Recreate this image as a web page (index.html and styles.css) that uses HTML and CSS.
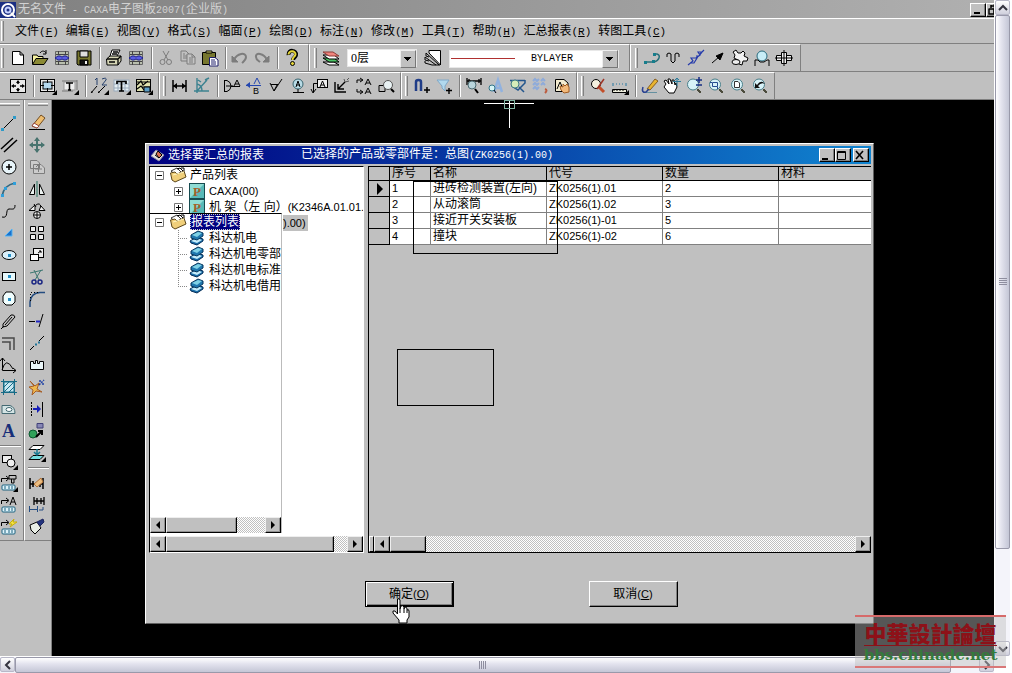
FILE: index.html
```html
<!DOCTYPE html>
<html lang="zh-CN">
<head>
<meta charset="utf-8">
<title>无名文件 - CAXA电子图板2007(企业版)</title>
<link rel="stylesheet" href="styles.css">
</head>
<body>
<svg class="defs" aria-hidden="true">
  <symbol id="tri-l" viewBox="0 0 8 8"><path d="M6 0V8L2 4Z" fill="#000" stroke="none"/></symbol>
  <symbol id="tri-r" viewBox="0 0 8 8"><path d="M2 0V8L6 4Z" fill="#000" stroke="none"/></symbol>
  <symbol id="folder" viewBox="0 0 18 16"><path d="M2 4L8 1L12 5L7 8Z" fill="#fff" stroke="#333"/><path d="M1.500 6L6 5L8 7L15 4L17 10L6 15L3 13Z" fill="#f0cf7a" stroke="#5c471a"/><path d="M4 8L15 5" stroke="#fff5c0"/><path d="M8 2L11 1L14 4M12 1H15V4" stroke="#000"/></symbol>
  <symbol id="book" viewBox="0 0 16 16"><path d="M1 11L8 7L14 9V11L8 15L2 13Z" fill="#176ca8" stroke="#052e58"/><path d="M2 11L8 8L13 10L8 13Z" fill="#c5edfa" stroke="none"/><path d="M2 5L9 1L14 3V6L8 10L2 8Z" fill="#1f77ae" stroke="#06365c"/><path d="M3 5L9 2L13 3L8 7Z" fill="#7fd2e6" stroke="none"/></symbol>
  <symbol id="part" viewBox="0 0 16 16"><rect x=".5" y=".5" width="15" height="15" fill="#58b9b8" stroke="#164b50"/><path d="M1 1H15L1 15Z" fill="#90dcd4" stroke="none"/><text x="4" y="13" font-family="Liberation Serif" font-weight="bold" font-size="13" fill="#a5602a" stroke="none">P</text></symbol>
  <symbol id="plus" viewBox="0 0 9 9"><path d="M.5.5H8.500V8.500H.5Z" fill="none" stroke="#777"/><path d="M2 4.500H7M4.500 2V7" fill="none" stroke="#000"/></symbol>
  <symbol id="minus" viewBox="0 0 9 9"><path d="M.5.5H8.500V8.500H.5Z" fill="none" stroke="#777"/><path d="M2 4.500H7" fill="none" stroke="#000"/></symbol>
  <symbol id="doc-link" viewBox="0 0 18 18"><path d="M2.500 2.500H15.500V15.500H2.500Z" fill="#b9bfae" stroke="#666"/><path d="M5.500 2V6M12.500 2V6M5.500 16V12M12.500 16V12M3 5.500H15M3 12.500H15" stroke="#444"/><path d="M2 9L5 7H7L9 8L11 7H13L16 9L13 11H11L9 10L7 11H5Z" fill="#5a5ee0" stroke="#20208c"/></symbol>
  <symbol id="lens" viewBox="0 0 18 18"><circle cx="8" cy="7.500" r="5.500" fill="#d7f2f8" stroke="#4a7f8a"/><path d="M12 12L16 16M12 13L15 16M13 12L16 15" stroke="#4b4b3c"/></symbol>
</svg>
<div class="shell">
  <main class="app">
    <header class="titlebar">
      <svg class="logo" viewBox="0 0 16 16" aria-hidden="true"><rect width="16" height="16" fill="#1b2f83" stroke="none"/><circle cx="8" cy="8" r="6" stroke="#fff" stroke-width="2"/><circle cx="8" cy="8" r="2.500" stroke="#c7d2ff" stroke-width="2"/><path d="M11 11L15 15" stroke="#fff" stroke-width="2"/></svg>
      <h1>无名文件<span class="lat"> - CAXA</span>电子图板<span class="lat">2007(</span>企业版<span class="lat">)</span></h1>
      <button class="win" aria-label="最小化"><svg viewBox="0 0 12 11"><path d="M3 9H9" stroke-width="2"/></svg></button>
      <button class="win cut" aria-label="还原"><svg viewBox="0 0 12 11"><path d="M4 2H9V6M4 1V4M1.500 5H7V10H2V5" stroke-width="1.500"/></svg></button>
    </header>
    <nav class="menubar">
      <i class="grip"></i>
      <a href="#">文件<span class="lat">(<u>F</u>)</span></a><a href="#">编辑<span class="lat">(<u>E</u>)</span></a><a href="#">视图<span class="lat">(<u>V</u>)</span></a><a href="#">格式<span class="lat">(<u>S</u>)</span></a><a href="#">幅面<span class="lat">(<u>P</u>)</span></a><a href="#">绘图<span class="lat">(<u>D</u>)</span></a><a href="#">标注<span class="lat">(<u>N</u>)</span></a><a href="#">修改<span class="lat">(<u>M</u>)</span></a><a href="#">工具<span class="lat">(<u>T</u>)</span></a><a href="#">帮助<span class="lat">(<u>H</u>)</span></a><a href="#">汇总报表<span class="lat">(<u>R</u>)</span></a><a href="#">转图工具<span class="lat">(<u>C</u>)</span></a>
    </nav>
    <div class="barrow standard">
      <div class="bar">
        <i class="grip"></i>
        <button aria-label="新建"><svg viewBox="0 0 18 18"><path d="M3.500 2.500H11L14.500 6V15.500H3.500ZM11 2.500V6H14.500" fill="#fff"/></svg></button>
        <button aria-label="打开"><svg viewBox="0 0 18 18"><path d="M1.500 15V6H6L7 7.500H12V9" fill="#f5f0a0"/><path d="M1.500 15.500L5 9.500H17L13 15.500Z" fill="#8b8a35"/><path d="M9 4C11 1 14 2 15 4M15 1V5H12"/></svg></button>
        <button aria-label="部分存储"><svg><use href="#doc-link"/></svg></button>
        <button aria-label="保存"><svg viewBox="0 0 18 18"><path d="M2 2H16V16H3L2 15Z" fill="#77762d"/><path d="M5 2H13V8H5Z" fill="#ddd"/><path d="M5 11H13V16H5Z" fill="#111"/><path d="M11 12V15" stroke="#eee" stroke-width="2"/></svg></button>
        <i class="sep"></i>
        <button aria-label="打印"><svg viewBox="0 0 18 18"><path d="M5 7L7 1H15L12 7" fill="#fff"/><path d="M1.500 10L5 7H16V12L13 16H2Z" fill="#d5d5b5"/><path d="M2 10H13L16 7M13 10V16M8 3H13M7 5H12M4 13H10" stroke-width="1.300"/></svg></button>
        <button aria-label="打印排版"><svg><use href="#doc-link"/></svg></button>
        <i class="sep"></i>
        <button aria-label="剪切"><svg class="dim" viewBox="0 0 18 18"><path d="M6 2L11 11M12 2L7 11" /><circle cx="5.500" cy="13" r="2.500"/><circle cx="12" cy="13" r="2.500"/></svg></button>
        <button aria-label="复制"><svg class="dim" viewBox="0 0 18 18"><path d="M2 2H7L10 5V12H2ZM4 5H6M4 7H8M4 9H8"/><path d="M8 5H13L16 8V15H8Z" fill="#c4c4c4"/><path d="M10 9H14M10 11H14M10 13H14M13 5V8H16"/></svg></button>
        <button aria-label="粘贴"><svg viewBox="0 0 18 18"><path d="M1.500 3.500H14.500V15.500H1.500Z" fill="#77772f"/><path d="M5 4V2H11V4Z" fill="#e4e07a"/><path d="M8.500 8.500H14L17 11V17H8.500Z" fill="#fff" stroke="#20206c"/><path d="M10 11H14M10 13H15M10 15H15" stroke="#20206c"/></svg></button>
        <i class="sep"></i>
        <button aria-label="撤消"><svg class="dim" viewBox="0 0 18 18"><path d="M3 11C6 4 15 3 15 8C15 11 12 13 11 14" stroke-width="2"/><path d="M1 7V13H7Z" fill="#7d7d7d"/></svg></button>
        <button aria-label="重做"><svg class="dim" viewBox="0 0 18 18"><path d="M14 11C11 4 2 3 3 8C3 11 6 12 7 13" stroke-width="2"/><path d="M16 7V13H10Z" fill="#7d7d7d"/></svg></button>
        <i class="sep"></i>
        <button aria-label="帮助"><svg viewBox="0 0 18 18"><path d="M5.500 6C5 0 14 1 13 6C13 8 10 8.500 10 11" stroke-width="4"/><path d="M5.500 5.500C5.500 1 13 1.500 12.500 5.500C12 8 9.500 8 9.500 11" stroke="#e5d539" stroke-width="2"/><circle cx="9.500" cy="14.500" r="2" fill="#e5d539"/></svg></button>
      </div>
      <div class="bar">
        <i class="grip"></i>
        <button aria-label="层控制"><svg viewBox="0 0 18 18"><path d="M1 13H12L17 16H7Z" fill="#fff"/><path d="M1 9H12L17 13H7Z" fill="#4ac564"/><path d="M1 6H12L17 10H7Z" fill="#fff"/><path d="M1 3H11L17 7H7Z" fill="#f0847d" stroke="#8c3b36"/></svg></button>
        <label class="combo layer"><select aria-label="当前层"><option>0层</option></select></label>
        <button aria-label="线型"><svg viewBox="0 0 18 18"><path d="M5 1.500H16.500V16L5 4Z" fill="#fff"/><path d="M2 4L15 16M1 8L12 16M2 4V7L5 8M1 8V11L5 12M1 12V14L8 16H16"/></svg></button>
        <label class="combo linetype"><select aria-label="线型选择"><option>BYLAYER</option></select></label>
      </div>
      <div class="bar">
        <i class="grip"></i>
        <button aria-label="多段线"><svg viewBox="0 0 18 18"><path d="M2 13H11M11 5H14Q17 6 16 9T11 13" stroke="#286f79" stroke-width="1.500"/><path d="M1 12H4V15H1ZM9 11H12V14H9ZM10 4H13V7H10Z" fill="#167d8c" stroke="none"/></svg></button>
        <button aria-label="波浪线"><svg viewBox="0 0 18 18"><path d="M2 8V5L4 4L6 5V12L8 14L10 12V5L12 4L14 5V8"/></svg></button>
        <button aria-label="双折线"><svg class="blue" viewBox="0 0 18 18"><path d="M1 16L6 12L4 9H10L7 14H3M9 9L13 6L11 3H15L12 7H9M13 5L17 1" stroke-width="1.200"/></svg></button>
        <button aria-label="箭头"><svg viewBox="0 0 18 18"><path d="M3 14L10 8"/><path d="M14 4L11 11L7 7Z" fill="#000"/></svg></button>
        <button aria-label="齿轮"><svg viewBox="0 0 18 18"><path d="M2 3L5 1L7 4H10L12 2L14 4L13 7L17 9L16 12L12 12L11 16L8 15L7 11L3 9L4 6Z" fill="#f2f2f2"/><ellipse cx="5" cy="13" rx="4" ry="2.500" fill="#eee"/></svg></button>
        <button aria-label="圆弧拟合"><svg viewBox="0 0 18 18"><circle cx="9" cy="7" r="5" fill="#c8edf7" stroke="#286a7d"/><path d="M2 17V11H5L7 13H11L14 11H16V17"/></svg></button>
        <button aria-label="孔轴"><svg viewBox="0 0 18 18"><path d="M1.500 6.500H6.500V3.500H11.500V6.500H16.500V11.500H11.500V14.500H6.500V11.500H1.500Z" fill="#eee"/><path d="M6.500 6V12M11.500 6V12M9 1V17M0 9H18"/></svg></button>
      </div>
    </div>
    <div class="barrow">
      <div class="bar">
        <button aria-label="图幅"><svg viewBox="0 0 18 18"><rect x="1.500" y="2.500" width="15" height="13" fill="#e8e8e8"/><path d="M9 4V7M9 11V14M4 9H7M11 9H14" stroke-width="1.500"/><path d="M7 6L9 3L11 6ZM7 12L9 15L11 12ZM5 7L2 9L5 11ZM13 7L16 9L13 11Z" fill="#000" stroke="none"/></svg></button>
        <i class="sep"></i>
        <button aria-label="图框"><svg viewBox="0 0 18 18"><rect x="1.500" y="2.500" width="14" height="12" fill="#e8e8e8"/><rect x="4" y="5" width="9" height="7" fill="#b5d9ee"/><path d="M8.500 2V6M8.500 11V15M1 8.500H5M12 8.500H16"/><path d="M18 13V18H13Z" fill="#000" stroke="none"/></svg></button>
        <button aria-label="标题栏"><svg viewBox="0 0 18 18"><path d="M1 4H16M1 14H12M16 3V13" stroke="#777"/><rect x="3" y="5" width="11" height="8" fill="#eee" stroke="#999"/><path d="M5 6H12M8.500 6V13M7 13H10" stroke-width="1.500"/><path d="M18 13V18H13Z" fill="#000" stroke="none"/></svg></button>
        <i class="sep"></i>
        <button aria-label="零件序号"><svg viewBox="0 0 18 18"><path d="M4 3L6 1V8M11 2Q16 0 15 3L11 8H16" stroke="#26406c"/><path d="M0 16L6 9M7 16L14 9M0 15H2M7 15H9"/><path d="M18 13V18H13Z" fill="#000" stroke="none"/></svg></button>
        <button aria-label="明细表"><svg viewBox="0 0 18 18"><rect x="1" y="3" width="15" height="11" fill="#e5eef2" stroke="#9ab"/><path d="M1 7H16M1 11H16M5 3V14M12 3V14" stroke="#9ab"/><path d="M4 7V4.500H13V7M8.500 4V14M6 14H11" stroke-width="1.700"/><path d="M18 13V18H13Z" fill="#000" stroke="none"/></svg></button>
        <button aria-label="图库"><svg viewBox="0 0 18 18"><rect x="1.500" y="2.500" width="14" height="12" fill="#e0e1ad"/><path d="M2 8L6 4L8 8L13 4M2 12L6 9L9 13M2 5H15M7 10H15" stroke-width="1.200"/><path d="M9 10H15V15H9Z" fill="#5b9dc6"/><path d="M18 13V18H13Z" fill="#000" stroke="none"/></svg></button>
      </div>
      <div class="bar">
        <i class="grip"></i>
        <button aria-label="尺寸标注"><svg viewBox="0 0 18 18"><path d="M2 3V15M15 3V15M2 9H15" stroke-width="1.500"/><path d="M6 6V12L2 9ZM11 6V12L15 9Z" fill="#000" stroke="none"/></svg></button>
        <button aria-label="坐标标注"><svg class="teal" viewBox="0 0 18 18"><path d="M4 1V16M1 14H16M4 14L14 3M4 7Q9 8 9 14M12 3L16 1M5 3L8 5" stroke-width="1.400"/></svg></button>
        <i class="sep"></i>
        <button aria-label="倒角标注"><svg viewBox="0 0 18 18"><path d="M1.500 3V15M1 3.500H4Q8 5 8 9T4 14.500H1M3 9H10M8 9.500H17M11 9L14 3L17 9M12 7H16"/></svg></button>
        <button aria-label="引出说明"><svg viewBox="0 0 18 18"><path d="M1 8.500H16M9 7L12 1L15 7" stroke="#2447af"/><path d="M1 8L5 5V11Z" fill="#2447af" stroke="none"/><text x="8" y="17" font-size="9" font-family="Liberation Sans" fill="#000" stroke="none">B</text></svg></button>
        <button aria-label="粗糙度"><svg viewBox="0 0 18 18"><path d="M3 6L7 14L15 2M4 7.500H11M7 14L10 8"/></svg></button>
        <button aria-label="基准代号"><svg viewBox="0 0 18 18"><circle cx="9" cy="7" r="5" fill="#b8dbe6" stroke="#37636e"/><path d="M7 10L9 4L11 10M7 8H11M9 12V15M4 15.500H15"/></svg></button>
        <button aria-label="形位公差"><svg viewBox="0 0 18 18"><rect x="6.500" y="2.500" width="10" height="8" fill="#eee"/><path d="M9 10L11.500 4L14 10M10 8H13M6 6.500H2.500V15M0 12L2 16L5 12"/></svg></button>
        <button aria-label="焊接符号"><svg viewBox="0 0 18 18"><path d="M2 5V15H13M5 7V12H11M5 12L12 5" stroke-width="1.400"/><path d="M12 5L11 2M12 5L16 4M14 3L16 1" stroke="#555"/></svg></button>
        <button aria-label="剖切符号"><svg viewBox="0 0 18 18"><path d="M2 6V3H7M2 12V15H7M5 1L8 3L5 5M5 13L8 15L5 17"/><path d="M10 8L13 2L16 8M10 17L13 11L16 17M11 6H15M11 15H15"/></svg></button>
        <button aria-label="局部放大"><svg viewBox="0 0 18 18"><path d="M2 8.500H8V14.500H2Z"/><circle cx="11" cy="8" r="4.500" fill="#e8f1f3" stroke="#555"/><path d="M14 12L17 15" stroke-width="2"/></svg></button>
      </div>
      <div class="bar">
        <i class="grip"></i>
        <button aria-label="捕捉"><svg viewBox="0 0 18 18"><path d="M3 14V5Q3 3 5.500 3T8 5V14" stroke="#203d88" stroke-width="2.500"/><path d="M11 13H17M14 10V16" stroke-width="1.500"/></svg></button>
        <button aria-label="过滤"><svg viewBox="0 0 18 18"><path d="M2 3H14L10 9V14L7 11V9Z" fill="#b1d9ee" stroke="#80a8c8"/><path d="M11 13.500H17M14 11V17" stroke-width="1.400"/></svg></button>
        <i class="sep"></i>
        <button aria-label="查询距离"><svg viewBox="0 0 18 18"><path d="M2 1V8M16 1V8M2 4H16M4 2V6M14 2V6" stroke-width="1.300"/><circle cx="7" cy="8" r="4" fill="#b9d5dc" stroke="#4c6b72"/><path d="M10 12L13 16" stroke-width="2"/></svg></button>
        <button aria-label="查询文字"><svg viewBox="0 0 18 18"><path d="M7 15L11 3L15 15M8 11H14" stroke="#91b2df" stroke-width="2.500"/><circle cx="5" cy="11" r="3" fill="#d6f4f6" stroke="#31758a"/><path d="M7 13L9 16"/></svg></button>
        <button aria-label="面积"><svg viewBox="0 0 18 18"><path d="M1 3.500H16M3 3V9L9 13L16 6V3M10 10L15 15" stroke="#23568d" stroke-width="1.500"/><circle cx="6" cy="7" r="4" fill="#d5ecb9" stroke="#407b85"/></svg></button>
        <button aria-label="打断标注"><svg class="sky" viewBox="0 0 18 18"><path d="M2 4L4 2L6 4L8 2M2 8L4 6L6 8L8 6M2 12L4 10L6 12L8 10M10 4L12 2L14 4M10 8L12 6L14 8" stroke-width="2"/><path d="M14 12Q17 13 14 16" stroke="#bd5c3e" stroke-width="2"/></svg></button>
        <button aria-label="属性查看"><svg viewBox="0 0 18 18"><path d="M2.500 2.500H11L15 6V14.500H2.500Z" fill="#f3ebcf"/><path d="M4 12L7 5L10 12"/><path d="M8 13L7 9L10 10V7L12 9L14 7L16 10V15L11 16Z" fill="#f2b97a" stroke="#9f5b22"/></svg></button>
      </div>
      <div class="bar">
        <i class="grip"></i>
        <button aria-label="查找替换"><svg viewBox="0 0 18 18"><circle cx="7" cy="7" r="4.500" fill="#f5f1df"/><path d="M10 10L15 15" stroke="#c34e28" stroke-width="3"/><path d="M8 12L15 2" stroke="#9e3527" stroke-width="1.500"/></svg></button>
        <button aria-label="标尺"><svg viewBox="0 0 18 18"><path d="M2 6V9M5 7H6M8 7H9M11 7H12M15 6V9" stroke="#2777a0"/><path d="M1.500 12.500H15.500V15.500H1.500Z" fill="#eed"/><path d="M3 12V14M6 12V14M9 12V14M12 12V14"/><path d="M18 13V18H13Z" fill="#000" stroke="none"/></svg></button>
        <i class="sep"></i>
        <button aria-label="重画"><svg viewBox="0 0 18 18"><path d="M2 15.500H16" stroke="#6590a0"/><path d="M6 12L14 2L17 4L9 13Z" fill="#e9b52f" stroke="#865d20"/><path d="M2 10Q0 16 5 15L8 12" stroke="#293f91" stroke-width="1.500"/></svg></button>
        <button aria-label="平移"><svg viewBox="0 0 18 18"><path d="M3 7L1 4L3 3L6 7L5 2H7L9 7V3H11L12 8L13 6L14 10L11 16H6L1 10Z" fill="#fff"/><path d="M14 1V9M10 4.500H18M12 3L14 1L16 3" stroke="#2b7b9a"/></svg></button>
        <button aria-label="动态缩放"><svg viewBox="0 0 18 18"><use href="#lens"/><path d="M11 3H17M14 0V6M11 8H17" stroke="#162e84" stroke-width="1.500"/></svg></button>
        <button aria-label="窗口显示"><svg viewBox="0 0 18 18"><use href="#lens"/><path d="M5.500 5.500H10.500V9.500H5.500ZM3 5.500H5M10.500 10V12" stroke="#244c91"/></svg></button>
        <button aria-label="全部显示"><svg viewBox="0 0 18 18"><use href="#lens"/><path d="M5.500 4.500H9L10.500 6V10.500H5.500Z" fill="#fff" stroke="#333"/></svg></button>
        <button aria-label="显示回溯"><svg viewBox="0 0 18 18"><use href="#lens"/><path d="M4 6V11H9L7 9Q10 5 14 7Q10 2 6 8Z" fill="#111" stroke="none"/></svg></button>
      </div>
    </div>
    <div class="work">
      <aside class="side">
        <div class="vbar">
          <i class="vgrip"></i>
          <button aria-label="直线"><svg viewBox="0 0 18 18"><path d="M2 16L15 3"/><path d="M1 14H4V17H1ZM13 2H16V5H13Z" fill="#2e9ac8" stroke="none"/></svg></button>
          <button aria-label="平行线"><svg viewBox="0 0 18 18"><path d="M1 13L13 2M4 16L17 4" stroke-width="1.500"/></svg></button>
          <button aria-label="圆"><svg viewBox="0 0 18 18"><circle cx="9" cy="9" r="7" fill="#e8f5fa"/><path d="M6 9H12M9 6V12" stroke-width="1.500"/></svg></button>
          <button aria-label="圆弧"><svg viewBox="0 0 18 18"><path d="M2 16Q4 5 15 3" stroke="#32677e" stroke-width="1.500"/><path d="M1 14H4V17H1ZM4 7H7V10H4ZM13 2H16V5H13Z" fill="#2e9fdb" stroke="none"/></svg></button>
          <button aria-label="样条"><svg viewBox="0 0 18 18"><path d="M2 15C9 17 5 7 9 7S15 8 15 3"/></svg></button>
          <button aria-label="点"><svg viewBox="0 0 18 18"><path d="M12 5V12H5Z" fill="#1b72ca" stroke="#54b3f5"/></svg></button>
          <button aria-label="椭圆"><svg viewBox="0 0 18 18"><ellipse cx="9" cy="9" rx="7" ry="4.500" fill="#d9effa"/><rect x="8" y="8" width="3" height="3" fill="#278ec3" stroke="none"/></svg></button>
          <button aria-label="矩形"><svg viewBox="0 0 18 18"><rect x="2.500" y="4.500" width="13" height="8" fill="#e6f8fb"/><rect x="8" y="7" width="3" height="3" fill="#278ec3" stroke="none"/></svg></button>
          <button aria-label="多边形"><svg viewBox="0 0 18 18"><path d="M6 2H12L15 6V12L12 15H6L3 12V6Z" fill="#f1ffff"/><rect x="8" y="8" width="3" height="3" fill="#278ec3" stroke="none"/></svg></button>
          <button aria-label="中心线"><svg viewBox="0 0 18 18"><path d="M3 12L11 3Q14 2 15 5L7 14L3 15ZM5 13L12 5M1 17L4 14"/></svg></button>
          <button aria-label="等距线"><svg viewBox="0 0 18 18"><path d="M2 4H14V16M2 8H10V16" stroke="#484848" stroke-width="1.500"/></svg></button>
          <button aria-label="公式曲线"><svg viewBox="0 0 18 18"><path d="M2.500 2V14.500H16M0 5L2.500 2L5 5M13 12L16 14.500L13 17M2 14Q6 0 13 13"/></svg></button>
          <button aria-label="剖面线"><svg viewBox="0 0 18 18"><rect x="4" y="4" width="10" height="10" fill="#c8e8f2" stroke="#176b86"/><path d="M3.500 1V17M14.500 1V17M1 3.500H17M1 14.500H17M4 9L9 4M4 14L14 4M9 14L14 9" stroke="#176b86"/></svg></button>
          <button aria-label="填充"><svg viewBox="0 0 18 18"><path d="M2 13.500V5.500H10Q15 7 15 13.500Z" fill="#d4e4e5" stroke="#446972"/><ellipse cx="9" cy="9.500" rx="3" ry="2" fill="#fff" stroke="#446972"/></svg></button>
          <button aria-label="文字"><svg viewBox="0 0 18 18"><text x="2" y="15" font-family="Liberation Serif" font-size="18" font-weight="bold" fill="#172e79" stroke="none">A</text></svg></button>
          <i class="hsep"></i>
          <button aria-label="块"><svg viewBox="0 0 18 18"><rect x="2.500" y="3.500" width="9" height="7" fill="#eee"/><circle cx="11" cy="11" r="4" fill="#eee"/><path d="M18 13V18H13Z" fill="#000" stroke="none"/></svg></button>
          <button aria-label="提取图符"><svg viewBox="0 0 18 18"><path d="M1.500 8V4.500H8M6 2L9 4.500L6 7M9 1.500H16V5H9ZM11.500 5V9H14V5"/><rect x="2" y="11" width="13" height="5" rx="1" fill="#dff3fa" stroke="#1c6380"/><path d="M5 12V15M9 12V15M12 12V15" stroke="#1c6380"/><path d="M18 13V18H13Z" fill="#000" stroke="none"/></svg></button>
          <button aria-label="图符文字"><svg viewBox="0 0 18 18"><path d="M1.500 8V4.500H8M6 2L9 4.500L6 7M10 9L13 1L16 9M11 6H15"/><rect x="2" y="11" width="13" height="5" rx="1" fill="#dff3fa" stroke="#1c6380"/><path d="M5 12V15M9 12V15M12 12V15" stroke="#1c6380"/></svg></button>
          <button aria-label="驱动图符"><svg viewBox="0 0 18 18"><path d="M1.500 8V4.500H8M6 2L9 4.500L6 7"/><path d="M14 1L9 6H12L10 9L17 4H13Z" fill="#f4e540" stroke="#c5ad12"/><rect x="2" y="11" width="13" height="5" rx="1" fill="#dff3fa" stroke="#1c6380"/><path d="M5 12V15M9 12V15M12 12V15" stroke="#1c6380"/></svg></button>
        </div>
        <div class="vbar">
          <i class="vgrip"></i>
          <button aria-label="删除"><svg viewBox="0 0 18 18"><path d="M1 15.500H17"/><path d="M4 12L13 1L17 4L9 14Z" fill="#eebd6f" stroke="#704c22"/><path d="M4 12L6 9L11 12L9 14Z" fill="#fff" stroke="#984539"/></svg></button>
          <button aria-label="移动"><svg viewBox="0 0 18 18"><path d="M9 2V16M2 9H16" stroke="#48746f" stroke-width="2"/><path d="M6 5L9 1L12 5ZM6 13L9 17L12 13ZM5 6L1 9L5 12ZM13 6L17 9L13 12Z" fill="#48746f" stroke="none"/></svg></button>
          <button aria-label="复制选择"><svg class="dim" viewBox="0 0 18 18"><path d="M2.500 2.500H9L11.500 5V10.500H2.500ZM5.500 6.500H13L16.500 10V15.500H5.500Z" fill="#ccc"/><path d="M7 11H14M10.500 8V14M8 9L10 7L12 9"/></svg></button>
          <button aria-label="镜像"><svg viewBox="0 0 18 18"><path d="M6.500 4V14.500H1.500ZM11.500 4V14.500H16.500Z" fill="#edf3f1"/><path d="M9 1V17" stroke="#287460"/></svg></button>
          <button aria-label="旋转"><svg viewBox="0 0 18 18"><path d="M7 8.500H1L7 3ZM11 8.500H17L13 4Z" fill="#eee"/><circle cx="9" cy="13" r="3.500" fill="#eee"/><path d="M6 13H12M9 10V16M8 3Q12 0 13 5M6 2L8 5"/></svg></button>
          <button aria-label="阵列"><svg viewBox="0 0 18 18"><path d="M2.500 2.500H7.500V7.500H2.500ZM10.500 2.500H15.500V7.500H10.500ZM2.500 10.500H7.500V15.500H2.500ZM10.500 10.500H15.500V15.500H10.500Z" fill="#eee"/></svg></button>
          <button aria-label="比例缩放"><svg viewBox="0 0 18 18"><rect x="5.500" y="2.500" width="10" height="9" fill="#eee"/><rect x="2.500" y="8.500" width="8" height="6" fill="#fff"/><path d="M10 7L13 5M11 5H13V7"/></svg></button>
          <button aria-label="裁剪"><svg viewBox="0 0 18 18"><path d="M2 5L15 2M6 2L11 12M13 2L7 12" stroke="#3d7771"/><circle cx="6" cy="14" r="2" stroke="#1b2683" stroke-width="1.500"/><circle cx="12" cy="14" r="2" stroke="#1b2683" stroke-width="1.500"/></svg></button>
          <button aria-label="过渡"><svg viewBox="0 0 18 18"><path d="M2 17V12Q3 3 12 2.500H17" stroke="#244c80" stroke-width="1.500"/><path d="M2.500 11V2.500H12" stroke-dasharray="1 2"/></svg></button>
          <button aria-label="齐边"><svg viewBox="0 0 18 18"><path d="M1 9.500H7M11 15L15 2"/><path d="M8 9.500H12" stroke="#2127c1" stroke-width="2"/></svg></button>
          <button aria-label="打断"><svg viewBox="0 0 18 18"><path d="M2 16L6 12M11 7L16 2"/><path d="M7 10.500H9M10 8.500H12" stroke="#25789b" stroke-width="2"/></svg></button>
          <button aria-label="拉伸"><svg viewBox="0 0 18 18"><path d="M2.500 5.500H5.500V7.500H7.500V4.500H9.500V7.500H11.500V5.500H15.500V13.500H2.500Z" fill="#eaf6f8"/></svg></button>
          <button aria-label="分解"><svg viewBox="0 0 18 18"><path d="M2 3L7 8L11 5L9 11L14 14L8 13L4 17L5 12L1 9L6 8Z" fill="#efb84d" stroke="#a55d27"/><path d="M11 7L16 2M12 2V4M14 6H16" stroke="#2143a5" stroke-width="1.500" stroke-dasharray="2 1"/></svg></button>
          <button aria-label="标注编辑"><svg viewBox="0 0 18 18"><path d="M3.500 2V17" stroke-dasharray="2 1"/><path d="M14.500 2V17" /><path d="M5 9H10" stroke="#171fb8" stroke-width="2"/><path d="M13 9L9 5V13Z" fill="#171fb8" stroke="none"/></svg></button>
          <button aria-label="格式刷"><svg viewBox="0 0 18 18"><circle cx="5" cy="12" r="4" fill="#30a15a" stroke="#0c5931"/><path d="M9 1.500H15V6H9Z" fill="#8787b5" stroke="#404078"/><path d="M8 15L14 9M10 9H14V13" stroke-width="2"/></svg></button>
          <button aria-label="图层移动"><svg viewBox="0 0 18 18"><path d="M5 1.500H16L12 5.500H1Z" fill="#fff"/><path d="M5 11.500H16L12 15.500H1Z" fill="#76dee1"/><path d="M9 5V11M6 8L9 11L12 8" stroke="#157991" stroke-width="1.500"/><path d="M18 13V18H13Z" fill="#000" stroke="none"/></svg></button>
          <i class="hsep"></i>
          <button aria-label="尺寸驱动"><svg viewBox="0 0 18 18"><path d="M2 4V15M15 4V15M2 10H15M5 7V13M12 7V13" stroke-width="1.500"/><path d="M6 10L13 4L15 8L9 13Z" fill="#ecbd80" stroke="#af7138"/></svg></button>
          <button aria-label="标注修改"><svg viewBox="0 0 18 18"><path d="M6 1V9M16 1V9M6 5H16M9 2V8M13 2V8" stroke-width="1.300"/><path d="M1.500 10V16M9.500 10V16M1 13.500H9M11 14H15V11" stroke="#264e83"/></svg></button>
          <button aria-label="特性刷"><svg viewBox="0 0 18 18"><path d="M2 7L9 4L13 10L7 16L3 12Z" fill="#e9eee6"/><path d="M9 4L15 1L16 4L12 8Z" fill="#23337d" stroke="#1c255d"/></svg></button>
        </div>
      </aside>
      <section class="canvas" aria-label="绘图区">
        <svg class="crosshair" viewBox="0 0 50 29"><path d="M0 3.500H50M25.500 0V28" stroke="#fff"/><rect x="20.500" y=".5" width="10" height="8" stroke="#83b7a4"/></svg>
        <div class="dialog" role="dialog" aria-label="选择要汇总的报表">
          <header class="dialog-title">
            <svg viewBox="0 0 16 16"><path d="M1 9L6 3L14 8L9 14Z" fill="#e6e2de" stroke="#8b8dab"/><path d="M6 7L8 4L12 8L9 11Z" fill="#d77055"/><path d="M5 8L9 11"/></svg>
            <h2>选择要汇总的报表</h2>
            <p>已选择的产品或零部件是：总图<span class="lat">(ZK0256(1).00)</span></p>
            <button class="win" aria-label="最小化"><svg viewBox="0 0 12 11"><path d="M2 9H8" stroke-width="2"/></svg></button><button class="win" aria-label="最大化"><svg viewBox="0 0 12 11"><path d="M1.500 1.500H9.500V9.500H1.500ZM1 2.500H10"/></svg></button><button class="win close" aria-label="关闭"><svg viewBox="0 0 12 11"><path d="M2 1L9 9M9 1L2 9" stroke-width="1.600"/></svg></button>
          </header>
          <div class="panes">
            <div class="tree-pane">
              <div class="products">
                <ul class="tree">
                  <li><svg class="node"><use href="#minus"/></svg><svg class="folder"><use href="#folder"/></svg><span>产品列表</span></li>
                  <li class="sub"><svg class="node"><use href="#plus"/></svg><svg class="pic"><use href="#part"/></svg><span class="sans">CAXA(00)</span></li>
                  <li class="sub"><svg class="node"><use href="#plus"/></svg><svg class="pic"><use href="#part"/></svg><span>机 架（左 向）<span class="sans">(K2346A.01.01.</span></span></li>
                  <li class="rest"><span class="sans">).00)</span></li>
                </ul>
                <div class="reports">
                  <ul class="tree">
                    <li><svg class="node"><use href="#minus"/></svg><svg class="folder"><use href="#folder"/></svg><span class="picked">报表列表</span></li>
                    <li class="leaf"><svg class="guide" viewBox="0 0 10 16"><path d="M.5 0V16M0 8.500H10"/></svg><svg class="pic"><use href="#book"/></svg><span>科达机电</span></li>
                    <li class="leaf"><svg class="guide" viewBox="0 0 10 16"><path d="M.5 0V16M0 8.500H10"/></svg><svg class="pic"><use href="#book"/></svg><span>科达机电零部</span></li>
                    <li class="leaf"><svg class="guide" viewBox="0 0 10 16"><path d="M.5 0V16M0 8.500H10"/></svg><svg class="pic"><use href="#book"/></svg><span>科达机电标准</span></li>
                    <li class="leaf"><svg class="guide" viewBox="0 0 10 16"><path d="M.5 0V8M0 8.500H10"/></svg><svg class="pic"><use href="#book"/></svg><span>科达机电借用</span></li>
                  </ul>
                  <div class="scroll small"><button aria-label="向左"><svg><use href="#tri-l"/></svg></button><i class="thumb"></i><i class="track"></i><button aria-label="向右"><svg><use href="#tri-r"/></svg></button></div>
                </div>
              </div>
              <div class="scroll wide"><button aria-label="向左"><svg><use href="#tri-l"/></svg></button><i class="thumb"></i><i class="track"></i><button aria-label="向右"><svg><use href="#tri-r"/></svg></button></div>
            </div>
            <div class="grid-pane">
              <table>
                <colgroup><col class="c0"><col class="c1"><col class="c2"><col class="c2"><col class="c2"><col></colgroup>
                <thead><tr><th></th><th>序号</th><th>名称</th><th>代号</th><th>数量</th><th>材料</th></tr></thead>
                <tbody>
                  <tr><th><svg class="mark" viewBox="0 0 8 12"><path d="M1 0V12L7 6Z" fill="#000" stroke="none"/></svg></th><td>1</td><td>进砖检测装置(左向)</td><td>ZK0256(1).01</td><td>2</td><td></td></tr>
                  <tr><th></th><td>2</td><td>从动滚筒</td><td>ZK0256(1).02</td><td>3</td><td></td></tr>
                  <tr><th></th><td>3</td><td>接近开关安装板</td><td>ZK0256(1)-01</td><td>5</td><td></td></tr>
                  <tr><th></th><td>4</td><td>撞块</td><td>ZK0256(1)-02</td><td>6</td><td></td></tr>
                </tbody>
              </table>
              <i class="outline first"></i>
              <i class="outline second"></i>
              <div class="scroll data"><i class="split"></i><button aria-label="向左"><svg><use href="#tri-l"/></svg></button><i class="thumb"></i><i class="track"></i><button aria-label="向右"><svg><use href="#tri-r"/></svg></button></div>
            </div>
          </div>
          <footer class="actions">
            <button class="push main">确定<span class="sans">(<u>O</u>)</span></button>
            <button class="push">取消<span class="sans">(<u>C</u>)</span></button>
          </footer>
          <svg class="hand" viewBox="0 0 20 26"><path d="M6.500 1Q8.500 0 9 2V11L10 8Q12 7 13 9V11L14 9Q16 9 16 11V12Q18 11 18 13V19L16 22V25H8V22L2 15Q1 12 4 13L6.500 16Z" fill="#fff"/><path d="M9 11V15M13 11V15M16 12V15"/></svg>
        </div>
      </section>
    </div>
  </main>
  <div class="xp vertical"><button aria-label="向上"><svg viewBox="0 0 10 10"><path d="M1 7L5 3L9 7"/></svg></button><i class="xthumb"><svg viewBox="0 0 8 8"><path d="M0 .5H8M0 2.500H8M0 4.500H8M0 6.500H8"/></svg></i><i class="xtrack"></i><button aria-label="向下"><svg viewBox="0 0 10 10"><path d="M1 3L5 7L9 3"/></svg></button></div>
  <div class="xp horizontal"><button aria-label="向左"><svg viewBox="0 0 10 10"><path d="M7 1L3 5L7 9"/></svg></button><i class="xthumb"><svg viewBox="0 0 8 8"><path d="M.5 0V8M2.500 0V8M4.500 0V8M6.500 0V8"/></svg></i><i class="xtrack"></i><button aria-label="向右"><svg viewBox="0 0 10 10"><path d="M3 1L7 5L3 9"/></svg></button></div>
  <div class="watermark"><strong>中華設計論壇</strong><span>bbs.chinade.net</span></div>
</div>
</body>
</html>
```
FILE: styles.css
```css
* { box-sizing: border-box; }
body { margin: 0; overflow: hidden; font: 12px/16px "Liberation Sans", "Noto Sans CJK SC", sans-serif; color: #000; }
svg { fill: none; stroke: #000; display: block; }
svg:not([viewBox]) { stroke: none; }
symbol { stroke: #000; }
symbol [stroke] { stroke-width: 1px; }
.defs { display: none; }
.dim { stroke: #7d7d7d; }
.blue { stroke: #2339ab; }
.teal { stroke: #3c8290; }
.sky { stroke: #8eabda; }
button { padding: 0; border: 0; background: none; font: inherit; color: inherit; }
h1, h2, p, ul { margin: 0; padding: 0; font: inherit; list-style: none; }
a { color: inherit; text-decoration: none; }
.lat { font-family: "Liberation Mono", monospace; font-size: 10px; white-space: pre; }
.sans { font-size: 11px; }

.shell { position: relative; display: grid; grid-template: minmax(0, 1fr) 17px / minmax(0, 1fr) 18px; height: 100vh; background: #fff; }
.app { display: flex; flex-direction: column; background: #c0c0c0; min-width: 0; overflow: hidden; }
.titlebar { display: flex; align-items: center; height: 18px; padding-top: 1px; background: linear-gradient(90deg, #808080, #b0b0b0); color: #d2d2d2; }
.logo { width: 16px; height: 16px; }
.titlebar h1 { flex: 1; padding-left: 2px; white-space: nowrap; }
.win { width: 16px; height: 14px; flex: none; background: #c0c0c0; border: 1px solid; border-color: #fff #000 #000 #fff; box-shadow: inset -1px -1px #808080; }
.win svg { width: 12px; height: 11px; }
.win.cut { width: 8px; overflow: hidden; border-right: 0; }
.menubar { display: flex; align-items: center; gap: 7px; height: 26px; border-top: 1px solid #fff; border-bottom: 1px solid #808080; white-space: nowrap; }
.menubar .lat { font-size: 11px; }
.grip { flex: none; width: 3px; height: 20px; border-left: 1px solid #fff; border-right: 1px solid #808080; }
.menubar .grip { margin: 0 4px 0 1px; }

.barrow { display: flex; height: 28px; border-bottom: 1px solid #808080; }
.bar { display: flex; align-items: center; padding: 0 3px; border-top: 1px solid #fff; border-left: 1px solid #fff; border-right: 1px solid #808080; }
.standard .bar { padding: 0 5px 0 4px; }
.bar .grip { margin-right: 3px; }
.bar > button { display: grid; place-items: center; width: 22px; height: 22px; flex: none; }
.bar button svg, .vbar button svg { width: 18px; height: 18px; overflow: visible; }
.barrow > .bar:first-child { border-left: 0; padding-left: 1px; }
.barrow > .bar:first-child > button:first-child { margin-left: 6px; }
.sep { width: 8px; height: 22px; flex: none; background: linear-gradient(90deg, transparent 4px, #808080 4px 5px, #fff 5px 6px, transparent 6px); }
.combo { position: relative; display: block; height: 18px; margin: 0 5px; }
.combo select { appearance: none; width: 100%; height: 18px; padding: 0 3px; border: 1px solid #e8e8e8; border-radius: 0; background: #fff; color: #000; font: 12px/14px "Liberation Serif", "Noto Sans CJK SC", serif; }
.combo::after { content: ""; position: absolute; right: 1px; top: 1px; width: 14px; height: 16px; pointer-events: none; background: linear-gradient(#000, #000) 3px 6px / 7px 1px no-repeat, linear-gradient(#000, #000) 4px 7px / 5px 1px no-repeat, linear-gradient(#000, #000) 5px 8px / 3px 1px no-repeat, linear-gradient(#000, #000) 6px 9px / 1px 1px no-repeat, #c0c0c0; border: 1px solid; border-color: #eee #777 #777 #eee; }
.layer { width: 70px; }
.linetype { width: 170px; }
.linetype select { padding-left: 81px; font: 10px/14px "Liberation Mono", monospace; background: linear-gradient(#b03030, #b03030) 1px 7px / 64px 1px no-repeat #fff; }

.work { display: flex; flex: 1; min-height: 0; }
.side { display: flex; align-items: flex-start; width: 52px; border-right: 1px solid #808080; }
.vbar { display: flex; flex-direction: column; align-items: flex-start; align-self: flex-start; border-right: 1px solid #808080; border-bottom: 1px solid #808080; padding-bottom: 2px; }
.vbar:first-child { width: 24px; }
.vbar:last-child { width: 27px; border-left: 1px solid #fff; padding-left: 3px; border-right: 0; }
.vbar > button { display: grid; place-items: center; width: 18px; height: 22px; }
.vgrip { width: 20px; height: 3px; margin: 3px 0 6px; border-top: 1px solid #fff; border-bottom: 1px solid #808080; }
.hsep { width: 21px; height: 8px; background: linear-gradient(transparent 3px, #808080 3px 4px, #fff 4px 5px, transparent 5px); }

.canvas { position: relative; flex: 1; background: #000; overflow: hidden; }
.crosshair { position: absolute; top: 0; left: 432px; width: 50px; height: 29px; }
.dialog { position: absolute; inset: 43px 120px 32px 93px; display: flex; flex-direction: column; padding: 2px 2px 1px 3px; background: #c0c0c0; border: 1px solid; border-color: #fff #606060 #606060 #fff; }
.dialog-title { display: flex; align-items: center; height: 18px; flex: none; padding: 0 2px 0 1px; background: linear-gradient(90deg, #000080, #1084d0); color: #fff; white-space: nowrap; }
.dialog-title > svg { width: 16px; height: 16px; }
.dialog-title h2 { padding-left: 2px; }
.dialog-title p { flex: 1; padding-left: 37px; }
.dialog-title .close { margin-left: 2px; }
.panes { display: flex; gap: 4px; flex: 1; min-height: 0; margin-top: 2px; }
.tree-pane { display: flex; flex-direction: column; width: 215px; background: #fff; border-left: 1px solid #000; border-top: 1px solid #000; border-right: 1px solid #fff; border-bottom: 1px solid #fff; }
.products { position: relative; flex: 1; min-height: 0; overflow: hidden; }
.tree li { display: flex; align-items: center; height: 16px; padding-left: 5px; white-space: nowrap; }
.tree .sub { padding-left: 24px; }
.tree .leaf { padding-left: 28px; }
.tree .rest { padding-left: 133px; }
.rest span { background: #c0c0c0; padding-right: 2px; }
.node { width: 9px; height: 9px; flex: none; }
.folder { width: 18px; height: 16px; margin: 0 3px 0 5px; flex: none; }
.pic { width: 16px; height: 16px; margin: 0 4px 0 6px; flex: none; }
.leaf .pic { margin-left: 1px; }
.guide { width: 10px; height: 16px; flex: none; stroke: #888; stroke-dasharray: 1 1; }
.picked { background: #000080; color: #fff; outline: 1px dotted #ccc; outline-offset: -1px; padding: 0 1px; }
.reports { position: absolute; top: 46px; left: 0; bottom: 3px; width: 132px; display: flex; flex-direction: column; background: #fff; border-top: 1px solid #000; border-right: 1px solid #bbb; }
.reports .tree { flex: 1; overflow: hidden; }

.scroll { display: flex; height: 16px; flex: none; }
.scroll button, .thumb { background: #c0c0c0; border: 1px solid; border-color: #eee #000 #000 #eee; box-shadow: inset -1px -1px #909090; flex: none; }
.scroll button { width: 16px; display: grid; place-items: center; }
.scroll button svg { width: 8px; height: 8px; }
.track { flex: 1; background: repeating-conic-gradient(#fff 0 25%, #c0c0c0 0 50%) 0 0 / 2px 2px; }
.small .thumb { flex: 0 0 54%; }
.wide .thumb { flex: 0 0 79%; }
.data .thumb { width: 36px; }
.split { width: 5px; border: 1px solid; border-color: #fff #000 #000 #fff; }
.grid-pane { position: relative; display: flex; flex-direction: column; justify-content: space-between; flex: 1; min-width: 0; border-left: 1px solid #000; border-bottom: 1px solid #000; border-top: 1px solid #000; }
table { table-layout: fixed; width: 100%; border-collapse: separate; border-spacing: 0; font-size: 11px; line-height: 15px; white-space: nowrap; }
.c0 { width: 21px; }
.c1 { width: 41px; }
.c2 { width: 116px; }
th, td { height: 16px; padding: 0 2px; text-align: left; font-weight: normal; background: #fff; border-right: 1px solid #808080; border-bottom: 1px solid #808080; overflow: hidden; }
thead th { height: 14px; line-height: 13px; font-size: 12px; }
th { background: #c0c0c0; border-color: #000; }
td:nth-child(3) { font-size: 12px; }
td:last-child, thead th:last-child { border-right: 0; }
.mark { width: 8px; height: 12px; margin-left: 5px; }
.outline { position: absolute; border: 1px solid #000; pointer-events: none; }
.first { left: 44px; top: 14px; width: 145px; height: 73px; }
.second { left: 28px; top: 182px; width: 97px; height: 57px; }
.actions { display: flex; justify-content: center; gap: 135px; flex: none; padding: 28px 0 15px 22px; }
.push { width: 89px; height: 26px; background: #c0c0c0; border: 1px solid; border-color: #fff #000 #000 #fff; box-shadow: inset -1px -1px #808080; }
.push.main { border: 1px solid #000; box-shadow: inset 1px 1px #fff, inset -1px -1px #000, inset -2px -2px #808080; }
.hand { position: absolute; left: 245px; top: 454px; width: 20px; height: 26px; }

.xp { display: flex; background: #f4f4fa; }
.vertical { flex-direction: column; border-left: 1px solid #fff; border-right: 2px solid #fff; }
.horizontal { border-top: 1px solid #fff; }
.xp button { width: 15px; height: 15px; flex: none; display: grid; place-items: center; border: 1px solid #b8b8c8; border-radius: 2px; background: linear-gradient(#fff, #d0d0dd); }
.xp button svg { width: 10px; height: 10px; stroke: #34343f; stroke-width: 2; }
.xthumb { display: grid; place-items: center; border: 1px solid #9999aa; border-radius: 2px; }
.xthumb svg { width: 8px; height: 8px; stroke: #8e8e9f; }
.vertical .xthumb { flex: 531; background: linear-gradient(90deg, #fff, #e4e4ef 40%, #c4c6d6); }
.vertical .xtrack { flex: 92; }
.horizontal .xthumb { flex: 934; background: linear-gradient(#fff, #e4e4ef 40%, #c4c6d6); }
.horizontal .xtrack { flex: 28; }
.watermark { position: absolute; right: 6px; bottom: 5px; width: 151px; height: 53px; display: flex; flex-direction: column; align-items: center; background: rgba(190, 190, 190, .45); border-top: 2px solid #d66a6a; border-bottom: 2px solid #d97878; overflow: hidden; white-space: nowrap; }
.watermark strong { color: #8d1118; font: 900 22px/26px "Noto Sans CJK TC", sans-serif; border-bottom: 1px solid #8d1118; margin-top: 2px; }
.watermark span { color: #347b3c; font: bold 15px/18px "DejaVu Serif", serif; }
```
